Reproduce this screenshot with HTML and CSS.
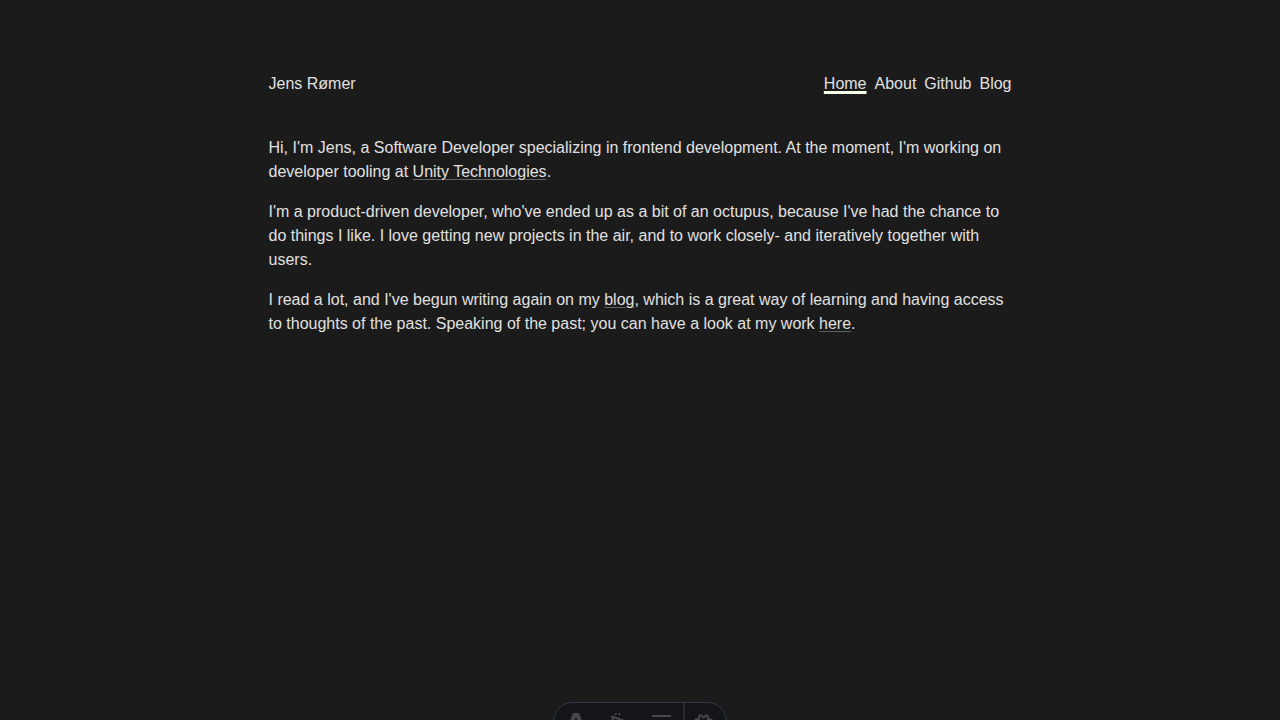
FILE: index.html
```html
<!DOCTYPE html>
<html lang="en">
<head>
<meta charset="utf-8">
<meta name="viewport" content="width=device-width, initial-scale=1">
<title>Jens Rømer</title>
<link rel="stylesheet" href="styles.css">
</head>
<body>
<div class="page">
  <header class="header">
    <a class="brand" href="#">Jens Rømer</a>
    <nav class="nav">
      <a class="nav-link active" href="#" aria-current="page">Home</a>
      <a class="nav-link" href="#">About</a>
      <a class="nav-link" href="#">Github</a>
      <a class="nav-link" href="#">Blog</a>
    </nav>
  </header>
  <main class="content">
    <p>Hi, I'm Jens, a Software Developer specializing in frontend development. At the moment, I'm working on developer tooling at <a href="#">Unity Technologies</a>.</p>
    <p>I'm a product-driven developer, who've ended up as a bit of an octupus, because I've had the chance to do things I like. I love getting new projects in the air, and to work closely- and iteratively together with users.</p>
    <p>I read a lot, and I've begun writing again on my <a href="#">blog</a>, which is a great way of learning and having access to thoughts of the past. Speaking of the past; you can have a look at my work <a href="#">here</a>.</p>
  </main>
</div>
<div class="toolbar">
  <button class="tool" aria-label="Menu"><svg width="20" height="20" viewBox="0 0 20 20"><path fill="currentColor" d="M7 16.500c-1-.9-1.200-2.500-.8-3.700 2 1.200 5.600 1.200 7.600 0 .4 1.200 0 2.700-1 3.500-.9.700-.7 1.700-.4 2.200-1-.3-1.500-1-1.500-2-.6.600-1.600 1-1.500 3-1.400-.6-2.500-1.500-2.400-3ZM3 12.500 6.500 1.800Q6.700 1 7.500 1h5q.8 0 1 .8L17 12.500q-2-1-4.500-1.200L10.500 6h-1l-2 5.300Q5 11.500 3 12.500Z"/></svg></button>
  <button class="tool" aria-label="Inspect"><svg width="20" height="20" viewBox="0 0 20 20" fill="none" stroke="currentColor" stroke-width="2"><path stroke-linejoin="round" d="m3 4.500 14 5-5 3-5 6.500L3 4.500Z"/><path d="m6.500 1 .5 2M10.500 1 10 3M0 9l2-.5"/></svg></button>
  <button class="tool" aria-label="Audit"><svg width="20" height="20" viewBox="0 0 20 20" fill="none" stroke="currentColor" stroke-width="2"><path d="M0 4h19M0 10h8M0 16h8"/><circle cx="14" cy="13" r="4"/><path d="m17 16 3 3"/></svg></button>
  <button class="tool settings" aria-label="Settings"><svg width="20" height="20" viewBox="0 0 20 20" fill="none" stroke="currentColor" stroke-width="2" stroke-linejoin="round"><path d="M5.500 3.500h2l1.500 2h1l1.500-2h2L14 7l3.500.5.500 2-2 1.500v1l2 1.500-.5 2L14 16l-.5 3h-2L10 17.500H9L7.500 19h-2L5 16l-3.500-.5-.5-2L3 12v-1L1 9.500l.5-2L5 7l.5-3.500Z"/><circle cx="9.500" cy="11.500" r="2.500"/></svg></button>
</div>
</body>
</html>
```

FILE: styles.css
```css
* { box-sizing: border-box; }
body {
  margin: 0;
  background: #1b1b1b;
  color: #e0e0e0;
  font: 16px/24px "Liberation Sans", Arial, sans-serif;
}
a { color: inherit; }
.page {
  max-width: 775px;
  margin: 0 auto;
  padding: 72px 16px 0;
}
.header {
  display: flex;
  justify-content: space-between;
}
.brand, .nav-link { text-decoration: none; }
.nav { display: flex; gap: 8px; }
.nav-link.active {
  text-decoration: underline #f6ffe8 3px;
  text-decoration-skip-ink: none;
  text-underline-offset: 2px;
}
.content { padding-top: 40px; }
.content p { margin: 0 0 16px; }
.content a {
  text-decoration: underline #626262 1px;
  text-underline-offset: 2px;
}
.toolbar {
  position: fixed;
  bottom: -22px;
  left: 50%;
  transform: translateX(-50%);
  display: flex;
  height: 40px;
  overflow: hidden;
  border: 1px solid #343640;
  border-radius: 20px;
  background: #13151a;
  color: #46474b;
}
.tool {
  display: flex;
  align-items: center;
  justify-content: center;
  width: 43px;
  padding: 0;
  border: 0;
  background: transparent;
  color: inherit;
}
.settings { border-left: 2px solid #292a31; padding-right: 4px; }
```
